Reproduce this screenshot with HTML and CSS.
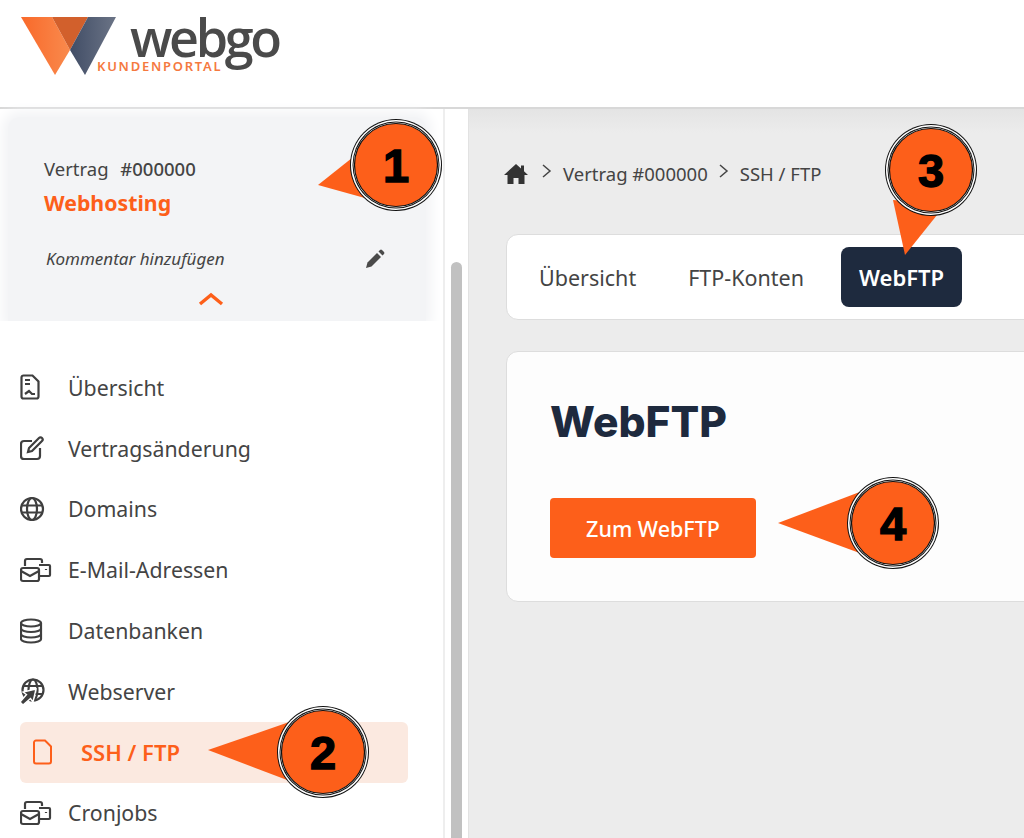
FILE: index.html
```html
<!DOCTYPE html>
<html lang="de">
<head>
  <meta charset="UTF-8" />
  <title>webgo Kundenportal</title>
  <link rel="stylesheet" href="styles.css">
</head>
<body>
  <header class="topbar">
    <div class="logo">
      <svg class="logo-mark" width="96" height="60" viewBox="0 0 96 60">
        <defs>
          <linearGradient id="logoOrange" x1="0" x2="1" y1="0" y2="0">
            <stop offset="0" stop-color="#f9692a"/>
            <stop offset="1" stop-color="#f98a4d"/>
          </linearGradient>
          <linearGradient id="logoBlue" x1="0" x2="1" y1="0" y2="0">
            <stop offset="0" stop-color="#414d66"/>
            <stop offset="1" stop-color="#6b7486"/>
          </linearGradient>
        </defs>
        <polygon points="0,0 31,0 49,33 34,58" fill="url(#logoOrange)"/>
        <polygon points="31,0 67,0 49,33" fill="#d2602c"/>
        <polygon points="67,0 95,0 64,58 49,33" fill="url(#logoBlue)"/>
      </svg>
      <span class="logo-word">webgo</span>
      <span class="logo-sub">KUNDENPORTAL</span>
    </div>
  </header>

  <div class="layout">
    <aside class="sidebar">
      <section class="contract">
        <div class="contract-line">Vertrag <b>#000000</b></div>
        <div class="contract-type">Webhosting</div>
        <div class="contract-note">
          <em>Kommentar hinzufügen</em>
          <svg width="20" height="20" viewBox="0 0 20 20"><path d="M1 19l1.500-5.500L12 4l4 4-9.500 9.500z" fill="#4a4a4a"/><path d="M13.500 2.500L15 1a1.500 1.500 0 0 1 2 0l2 2a1.500 1.500 0 0 1 0 2l-1.500 1.500z" fill="#4a4a4a"/></svg>
        </div>
        <svg class="contract-toggle" width="26" height="14" viewBox="0 0 26 14"><path d="M2 12L13 3l11 9" fill="none" stroke="#fd5f1a" stroke-width="3.400"/></svg>
      </section>

      <nav class="menu">
        <a class="menu-item">
          <svg width="24" height="26" viewBox="0 0 24 26"><g class="ico"><path d="M1.500 3.500a2 2 0 0 1 2-2h9l6 6v15a2 2 0 0 1-2 2h-13a2 2 0 0 1-2-2z"/><path d="M5 6h5M5 10h5M5 20l4-3 3 3h3"/></g></svg>
          Übersicht
        </a>
        <a class="menu-item">
          <svg width="24" height="26" viewBox="0 0 24 26"><g class="ico"><path d="M20 13v8a3 3 0 0 1-3 3H4a3 3 0 0 1-3-3V9a3 3 0 0 1 3-3h8"/><path d="M8 17l1-4L19 3a1.800 1.800 0 0 1 3 3L12 16z"/></g></svg>
          Vertragsänderung
        </a>
        <a class="menu-item">
          <svg width="26" height="26" viewBox="0 0 26 26"><g class="ico"><circle cx="12" cy="13" r="11"/><ellipse cx="12" cy="13" rx="5" ry="11"/><path d="M1.500 9.500h21M1.500 16.500h21"/></g></svg>
          Domains
        </a>
        <a class="menu-item">
          <svg width="32" height="26" viewBox="0 0 32 26"><g class="ico"><path d="M5 9V4a2 2 0 0 1 2-2h13a2 2 0 0 1 2 2v2"/><path d="M19 8h10a1 1 0 0 1 1 1v9a1 1 0 0 1-1 1h-9"/><rect x="1" y="11" width="18" height="13" rx="2"/><path d="M1 14l9 5 9-5"/><path d="M26 12v1"/></g></svg>
          E-Mail-Adressen
        </a>
        <a class="menu-item">
          <svg width="24" height="26" viewBox="0 0 24 26"><g class="ico"><ellipse cx="11" cy="5" rx="10" ry="3.500"/><path d="M1 5v16c0 2 4.500 3.500 10 3.500S21 23 21 21V5"/><path d="M1 10.500c0 2 4.500 3.500 10 3.500s10-1.500 10-3.500M1 16c0 2 4.500 3.500 10 3.500S21 18 21 16"/></g></svg>
          Datenbanken
        </a>
        <a class="menu-item">
          <svg width="26" height="26" viewBox="0 0 26 26"><g class="ico"><circle cx="13" cy="12" r="10.500"/><ellipse cx="13" cy="12" rx="4.500" ry="10.500"/><path d="M3 8h20M3 16h20"/></g><path d="M0 24l6.500-7.500-3.500-2.500 13-3-3 13-2.500-3.500-7.500 6.500z" fill="#3f3f3f" stroke="#fff" stroke-width="1.400"/></svg>
          Webserver
        </a>
        <a class="menu-item is-active">
          <svg width="20" height="26" viewBox="0 0 20 26"><path d="M1 3.500a2 2 0 0 1 2-2h9l6 6v15a2 2 0 0 1-2 2H3a2 2 0 0 1-2-2z" fill="none" stroke="#fd5f1a" stroke-width="2"/></svg>
          SSH / FTP
        </a>
        <a class="menu-item">
          <svg width="32" height="26" viewBox="0 0 32 26"><g class="ico"><path d="M5 9V4a2 2 0 0 1 2-2h13a2 2 0 0 1 2 2v2"/><path d="M19 8h10a1 1 0 0 1 1 1v9a1 1 0 0 1-1 1h-9"/><rect x="1" y="11" width="18" height="13" rx="2"/><path d="M1 14l9 5 9-5"/><path d="M26 12v1"/></g></svg>
          Cronjobs
        </a>
      </nav>
    </aside>

    <div class="scroll-track"><div class="scroll-thumb"></div></div>

    <main class="main">
      <div class="breadcrumb">
        <svg class="crumb-home" width="24" height="22" viewBox="0 0 24 22"><path d="M12 1L0 12h3.500v9h6v-6h5v6h6v-9H24l-4-3.700V2.500h-3v3z" fill="#333"/></svg>
        <svg class="crumb-sep" width="12" height="16" viewBox="0 0 12 16"><path d="M2 2l7 6-7 6" fill="none" stroke="#444" stroke-width="1.500"/></svg>
        <span>Vertrag #000000</span>
        <svg class="crumb-sep" width="12" height="16" viewBox="0 0 12 16"><path d="M2 2l7 6-7 6" fill="none" stroke="#444" stroke-width="1.500"/></svg>
        <span>SSH / FTP</span>
      </div>

      <div class="tabs">
        <a class="tab">Übersicht</a>
        <a class="tab">FTP-Konten</a>
        <a class="tab is-current">WebFTP</a>
      </div>

      <section class="panel">
        <h1>WebFTP</h1>
        <button class="primary-btn">Zum WebFTP</button>
      </section>
    </main>
  </div>

  <!-- numbered callouts laid over the screenshot -->
  <svg class="callouts" width="1024" height="838" viewBox="0 0 1024 838">
    <g class="callout"><polygon points="318,185 362,150 372,200"/><circle class="ring" cx="396" cy="165" r="46"/><circle class="gap" cx="396" cy="165" r="45"/><circle class="ring" cx="396" cy="165" r="43.500"/><circle class="gap" cx="396" cy="165" r="42.500"/><circle class="disc" cx="396" cy="165" r="41.500"/><text x="396" y="182">1</text></g>
    <g class="callout"><polygon points="208,750 295,720 295,783"/><circle class="ring" cx="323" cy="752" r="46"/><circle class="gap" cx="323" cy="752" r="45"/><circle class="ring" cx="323" cy="752" r="43.500"/><circle class="gap" cx="323" cy="752" r="42.500"/><circle class="disc" cx="323" cy="752" r="41.500"/><text x="323" y="769">2</text></g>
    <g class="callout"><polygon points="905,255 893,200 945,205"/><circle class="ring" cx="931" cy="170" r="46"/><circle class="gap" cx="931" cy="170" r="45"/><circle class="ring" cx="931" cy="170" r="43.500"/><circle class="gap" cx="931" cy="170" r="42.500"/><circle class="disc" cx="931" cy="170" r="41.500"/><text x="931" y="187">3</text></g>
    <g class="callout"><polygon points="778,523 865,490 865,555"/><circle class="ring" cx="893" cy="523" r="46"/><circle class="gap" cx="893" cy="523" r="45"/><circle class="ring" cx="893" cy="523" r="43.500"/><circle class="gap" cx="893" cy="523" r="42.500"/><circle class="disc" cx="893" cy="523" r="41.500"/><text x="893" y="540">4</text></g>
  </svg>
</body>
</html>
```

FILE: styles.css
```css
* {
  box-sizing: border-box;
}

html, body {
  height: 838px;
  overflow: hidden;
}

body {
  margin: 0;
  position: relative;
  font-family: 'Noto Sans', sans-serif;
  font-size: 20px;
  color: #444;
  background: #fff;
}

.topbar {
  height: 109px;
  border-bottom: 2px solid #d8d8d8;
  background: #fff;
  padding: 17px 0 0 21px;
}

.logo {
  display: flex;
  position: relative;
  height: 60px;
}

.logo-word {
  margin-left: 13px;
  height: 40px;
  font-family: 'Open Sans', sans-serif;
  font-size: 52px;
  font-weight: 600;
  line-height: 40px;
  letter-spacing: -3.300px;
  color: #4a4a4a;
}

.logo-sub {
  position: absolute;
  left: 76px;
  top: 42px;
  font-size: 13px;
  font-weight: 600;
  letter-spacing: 1.750px;
  color: #f5793f;
  line-height: 14px;
}

.layout {
  display: flex;
  height: 729px;
}

.sidebar {
  width: 445px;
  flex: none;
  padding-top: 8px;
  border-right: 2px solid #eee;
  background: #fff;
}

.contract {
  width: 418px;
  height: 204px;
  margin-left: 8px;
  padding: 38px 41px 0 36px;
  background: #f3f4f6;
  border-radius: 12px 12px 0 0;
  box-shadow: 0 0 12px 6px #f3f4f6;
  clip-path: inset(-20px -20px 0 -20px);
  display: flex;
  flex-direction: column;
}

.contract-line {
  font-size: 18.500px;
  line-height: 28px;
}

.contract-line b {
  font-weight: 500;
  margin-left: 7px;
}

.contract-type {
  margin-top: 2px;
  font-size: 21.300px;
  font-weight: 700;
  line-height: 36px;
  color: #fd5f1a;
}

.contract-note {
  display: flex;
  justify-content: space-between;
  align-items: center;
  margin-top: 26px;
  padding: 0 0 0 2px;
  font-size: 17px;
}

.contract-toggle {
  align-self: center;
  margin-top: 22px;
  margin-right: 7px;
}

.menu {
  margin-top: 36px;
  display: flex;
  flex-direction: column;
}

.menu-item {
  height: 60.800px;
  padding-left: 20px;
  display: grid;
  grid-template-columns: 48px 1fr;
  align-items: center;
  font-size: 21.300px;
  color: #444;
}

.menu-item.is-active {
  width: 388px;
  margin-left: 20px;
  padding-left: 13px;
  background: #fbe9e0;
  border-radius: 6px;
  color: #fd5f1a;
  font-size: 22px;
  font-weight: 600;
}

.ico {
  fill: none;
  stroke: #3f3f3f;
  stroke-width: 2.200;
}

.scroll-track {
  width: 23px;
  flex: none;
  padding: 153px 6px 0;
  background: #fff;
}

.scroll-thumb {
  height: 600px;
  background: #c1c1c1;
  border-radius: 6px 6px 0 0;
}

.main {
  flex: 1;
  min-width: 0;
  padding: 40px 0 0 37px;
  background: linear-gradient(#e4e4e4, #ececec 24px);
  border-left: 1px solid #e2e2e2;
  overflow: hidden;
}

.breadcrumb {
  display: flex;
  align-items: center;
  gap: 10px;
  height: 49px;
  font-size: 18.500px;
  color: #444;
}

.crumb-home {
  margin-left: -2px;
  margin-right: 3px;
}

.crumb-sep {
  margin-top: -6px;
}

.tabs {
  width: 640px;
  height: 86px;
  margin-top: 36px;
  padding: 0 0 0 32px;
  display: flex;
  align-items: center;
  background: #fff;
  border: 1px solid #ddd;
  border-radius: 12px;
}

.tab {
  font-size: 21.500px;
  margin-right: 52px;
  color: #444;
}

.tab:nth-child(2) {
  margin-right: 55px;
}

.tab.is-current {
  margin-left: -18px;
  height: 60px;
  padding: 0 18px;
  display: flex;
  align-items: center;
  background: #1e2a3e;
  border-radius: 8px;
  color: #fff;
  font-size: 22px;
  font-weight: 600;
}

.panel {
  width: 640px;
  height: 251px;
  margin-top: 31px;
  padding: 40px 43px;
  background: #fdfdfd;
  border: 1px solid #ddd;
  border-radius: 12px;
}

.panel h1 {
  margin: 0;
  font-family: 'Inter', sans-serif;
  font-size: 42.500px;
  font-weight: 800;
  line-height: 60px;
  color: #1e2a3e;
}

.primary-btn {
  display: block;
  width: 206px;
  height: 60px;
  margin-top: 46px;
  border: none;
  border-radius: 4px;
  background: #fd5f1a;
  font-family: 'Noto Sans', sans-serif;
  font-size: 21.500px;
  font-weight: 500;
  color: #fff;
}

.callouts {
  position: absolute;
  left: 0;
  top: 0;
}

.callout polygon, .disc {
  fill: #fd5f1a;
}

.ring {
  fill: #111;
}

.gap {
  fill: #fff;
}

.disc {
  stroke: #111;
  stroke-width: 1.200;
}

.callout text {
  font-family: 'Liberation Sans', sans-serif;
  font-size: 47px;
  font-weight: 700;
  text-anchor: middle;
  fill: #000;
  stroke: #000;
  stroke-width: 1.400;
}
```
